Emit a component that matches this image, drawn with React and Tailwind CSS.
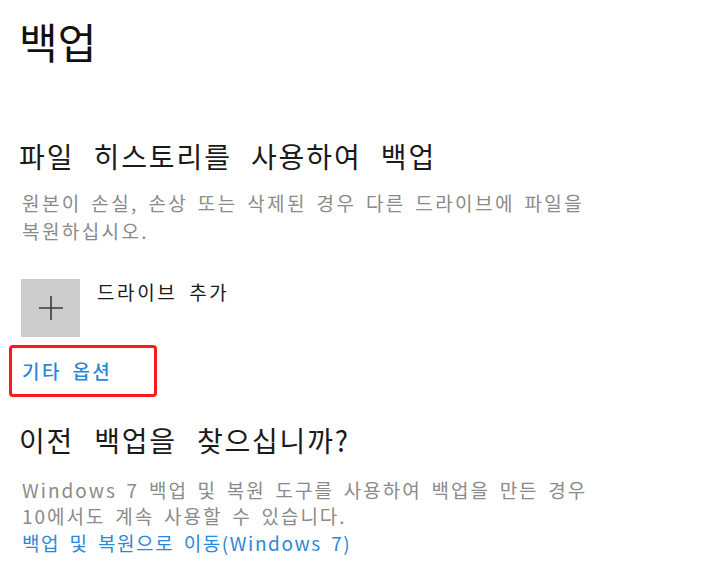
import React from "react";

export default function App() {
  return (
    <div className="w-[705px] h-[582px] bg-white overflow-hidden pl-[19px] pt-[12px] font-['Noto_Sans_CJK_KR',sans-serif]">
      <h1 className="text-[42px] leading-[58px] text-[#111] font-normal">백업</h1>

      <h2 className="mt-[66px] text-[28px] leading-[40px] text-[#1a1a1a] font-normal tracking-[1.9px] [word-spacing:11px] whitespace-nowrap">
        파일 히스토리를 사용하여 백업
      </h2>

      <p className="mt-[13px] text-[19px] leading-[28px] text-[#8a8a8a] tracking-[2.4px] [word-spacing:3px] whitespace-nowrap pl-[3px]">
        원본이 손실, 손상 또는 삭제된 경우 다른 드라이브에 파일을
        <br />
        복원하십시오.
      </p>

      <div className="mt-[34px] flex items-start gap-[17px] pl-[2px]">
        <div className="w-[59px] h-[58px] bg-[#cccccc] flex items-center justify-center">
          <svg width="24" height="24" viewBox="0 0 24 24">
            <path d="M12 0 V24 M0 12 H24" stroke="#3a3a3a" strokeWidth="1.6" />
          </svg>
        </div>
        <div className="text-[19px] leading-[26px] text-[#1a1a1a] tracking-[2.6px] [word-spacing:5px] whitespace-nowrap">
          드라이브 추가
        </div>
      </div>

      <div className="mt-[8px] -ml-[10px] w-[148px] h-[52px] border-[3px] border-[#ff1a1a] rounded-[4px] flex items-center pl-[10px]">
        <span className="text-[19px] leading-[26px] text-[#2a88d8] tracking-[2.4px] [word-spacing:4px] font-medium whitespace-nowrap">
          기타 옵션
        </span>
      </div>

      <h2 className="mt-[23px] text-[28px] leading-[40px] text-[#1a1a1a] font-normal tracking-[1.8px] [word-spacing:12px] whitespace-nowrap">
        이전 백업을 찾으십니까?
      </h2>

      <p className="mt-[17px] text-[19px] leading-[26px] text-[#8a8a8a] tracking-[2px] [word-spacing:3.5px] whitespace-nowrap pl-[3px]">
        Windows 7 백업 및 복원 도구를 사용하여 백업을 만든 경우
        <br />
        10에서도 계속 사용할 수 있습니다.
      </p>
      <p className="text-[19px] leading-[28px] text-[#2a88d8] tracking-[1.6px] [word-spacing:3.5px] whitespace-nowrap pl-[3px]">
        백업 및 복원으로 이동(Windows 7)
      </p>
    </div>
  );
}
